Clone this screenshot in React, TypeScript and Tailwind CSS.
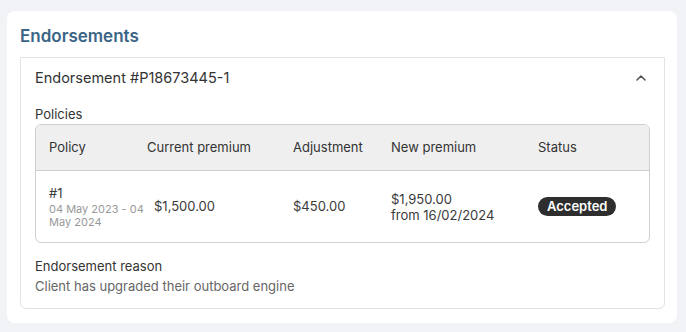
import React from "react";

export default function App() {
  const font = { fontFamily: "Inter, 'Noto Sans', sans-serif" };
  return (
    <div className="w-[686px] h-[332px] bg-[#f2f3f7] pt-[11px] pl-[7px]" style={font}>
      <div className="w-[670px] h-[312px] bg-white rounded-[8px] pt-[14px] px-[13px]">
        <h2 className="text-[17px] leading-[22px] font-semibold text-[#3b6585]">Endorsements</h2>
        <div className="mt-[10px] w-[645px] h-[252px] border border-[#e3e3e3] rounded-b-[6px] px-[14px]">
          <div className="flex items-center justify-between h-[38px] pt-[1px]">
            <span className="text-[14.5px] text-[#333] font-normal">Endorsement #P18673445-1</span>
            <svg width="12" height="12" viewBox="0 0 12 12" className="mr-[3px]">
              <path d="M2 8 L6 4 L10 8" fill="none" stroke="#555" strokeWidth="1.6" strokeLinecap="round" strokeLinejoin="round" />
            </svg>
          </div>
          <div className="text-[13px] leading-[16px] text-[#333] mt-[10px]">Policies</div>
          <div className="mt-[2px] w-[615px] border border-[#cfcfcf] rounded-[6px] overflow-hidden">
            <div className="grid grid-cols-[98px_146px_98px_147px_1fr] bg-[#efefef] h-[46px] items-center px-[13px] border-b border-[#cfcfcf] text-[13px] text-[#333]">
              <span>Policy</span>
              <span>Current premium</span>
              <span>Adjustment</span>
              <span>New premium</span>
              <span>Status</span>
            </div>
            <div className="grid grid-cols-[98px_146px_98px_147px_1fr] h-[71px] items-center px-[13px] text-[13px] text-[#3a3a3a]">
              <div className="flex flex-col">
                <span className="leading-[16px]">#1</span>
                <span className="mt-[2px] text-[11px] leading-[13px] text-[#999] whitespace-nowrap">
                  04 May 2023 - 04
                  <br />
                  May 2024
                </span>
              </div>
              <span className="pl-[7px]">$1,500.00</span>
              <span>$450.00</span>
              <div className="flex flex-col leading-[16px]">
                <span>$1,950.00</span>
                <span>from 16/02/2024</span>
              </div>
              <div>
                <span className="inline-block bg-[#2e2e2e] text-white font-semibold text-[13px] leading-[19px] px-[9px] rounded-full">Accepted</span>
              </div>
            </div>
          </div>
          <div className="mt-[14px] text-[13px] leading-[18px] text-[#333]">Endorsement reason</div>
          <div className="mt-[2px] text-[13px] leading-[18px] text-[#666]">Client has upgraded their outboard engine</div>
        </div>
      </div>
    </div>
  );
}
